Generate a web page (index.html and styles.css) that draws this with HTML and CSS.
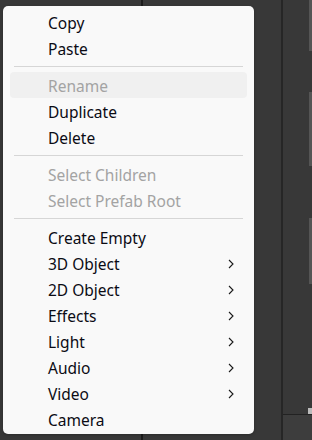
FILE: index.html
```html
<html lang="en">

<head>
	<meta charset="UTF-8" />
	<meta name="viewport" content="width=device-width, initial-scale=1.0" />
	<title>Hierarchy menu</title>
<link rel="stylesheet" href="styles.css">
</head>

<body>
	<main class="editor">
		<section class="pane pane--left"></section>
		<div class="splitter"></div>
		<section class="pane pane--mid"></section>
		<div class="splitter splitter--thin"></div>
		<section class="pane pane--right">
			<div class="inspector">
				<div class="inspector__strip">
					<span class="inspector__block inspector__block--a"></span>
					<span class="inspector__block inspector__block--b"></span>
					<span class="inspector__block inspector__block--c"></span>
				</div>
				<span class="inspector__tick"></span>
			</div>
			<div class="inspector__footer"></div>
		</section>
	</main>

	<ul class="context-menu">
		<li class="context-menu__item">Copy</li>
		<li class="context-menu__item">Paste</li>
		<li class="context-menu__sep"></li>
		<li class="context-menu__item context-menu__item--disabled context-menu__item--hover">Rename</li>
		<li class="context-menu__item">Duplicate</li>
		<li class="context-menu__item">Delete</li>
		<li class="context-menu__sep"></li>
		<li class="context-menu__item context-menu__item--disabled">Select Children</li>
		<li class="context-menu__item context-menu__item--disabled">Select Prefab Root</li>
		<li class="context-menu__sep"></li>
		<li class="context-menu__item">Create Empty</li>
		<li class="context-menu__item context-menu__item--sub">3D Object<svg class="context-menu__arrow" viewBox="0 0 6 10"><path d="M1 1l4 4-4 4"/></svg></li>
		<li class="context-menu__item context-menu__item--sub">2D Object<svg class="context-menu__arrow" viewBox="0 0 6 10"><path d="M1 1l4 4-4 4"/></svg></li>
		<li class="context-menu__item context-menu__item--sub">Effects<svg class="context-menu__arrow" viewBox="0 0 6 10"><path d="M1 1l4 4-4 4"/></svg></li>
		<li class="context-menu__item context-menu__item--sub">Light<svg class="context-menu__arrow" viewBox="0 0 6 10"><path d="M1 1l4 4-4 4"/></svg></li>
		<li class="context-menu__item context-menu__item--sub">Audio<svg class="context-menu__arrow" viewBox="0 0 6 10"><path d="M1 1l4 4-4 4"/></svg></li>
		<li class="context-menu__item context-menu__item--sub">Video<svg class="context-menu__arrow" viewBox="0 0 6 10"><path d="M1 1l4 4-4 4"/></svg></li>
		<li class="context-menu__item">Camera</li>
	</ul>
</body>

</html>
```

FILE: styles.css
```css
:root{
  --bg: #383838;
  --line: #1c1c1c;
  --menu: #f9f9f9;
  --text: #0b0b14;
  --muted: #a3a3a3;
}

*{
  box-sizing: border-box;
}

html, body{
  margin: 0;
  height: 100%;
  overflow: hidden;
}

body{
  position: relative;
  background-color: var(--bg);
  font-family: "Noto Sans", "Open Sans", sans-serif;
}

.editor{
  height: 100%;
  display: flex;
}

.pane--left{
  width: 141px;
}

.pane--mid{
  width: 138px;
}

.pane--right{
  flex: 1;
  display: flex;
  flex-direction: column;
}

.splitter{
  width: 2px;
  background-color: var(--line);
}

.splitter--thin{
  width: 2px;
  background-color: #262626;
}

.inspector{
  flex: 1;
  position: relative;
  display: flex;
  justify-content: flex-end;
  border-bottom: 1px solid #222;
}

.inspector__strip{
  width: 3px;
  display: flex;
  flex-direction: column;
}

.inspector__block{
  background-color: #555;
}

.inspector__block--a{
  height: 51px;
  margin-bottom: 41px;
}

.inspector__block--b{
  height: 74px;
  margin-bottom: 52px;
}

.inspector__block--c{
  height: 66px;
}

.inspector__tick{
  position: absolute;
  right: 0;
  bottom: 0;
  width: 4px;
  height: 6px;
  background-color: #bbb;
}

.inspector__footer{
  height: 25px;
  background-color: #3d3d3d;
}

.context-menu{
  position: absolute;
  left: 3px;
  top: 6px;
  width: 251px;
  height: 428px;
  margin: 0;
  padding: 3px 7px 2px;
  list-style: none;
  background-color: var(--menu);
  border-radius: 5px;
  box-shadow: 0 1px 3px rgba(0, 0, 0, .25);
}

.context-menu__item{
  height: 26px;
  display: flex;
  align-items: center;
  padding: 2px 13px 0 38px;
  border-radius: 4px;
  font-size: 15.5px;
  color: var(--text);
  white-space: nowrap;
}

.context-menu__item--sub{
  justify-content: space-between;
}

.context-menu__item--disabled{
  color: var(--muted);
}

.context-menu__item--hover{
  background-color: #f0f0f0;
}

.context-menu__arrow{
  width: 6px;
  height: 10px;
  fill: none;
  stroke: #1a1a1a;
  stroke-width: 1.1;
}

.context-menu__sep{
  height: 11px;
  display: flex;
  align-items: center;
  padding: 0 4px;
}

.context-menu__sep::before{
  content: "";
  flex: 1;
  height: 1px;
  background-color: #d6d6d6;
}
```
